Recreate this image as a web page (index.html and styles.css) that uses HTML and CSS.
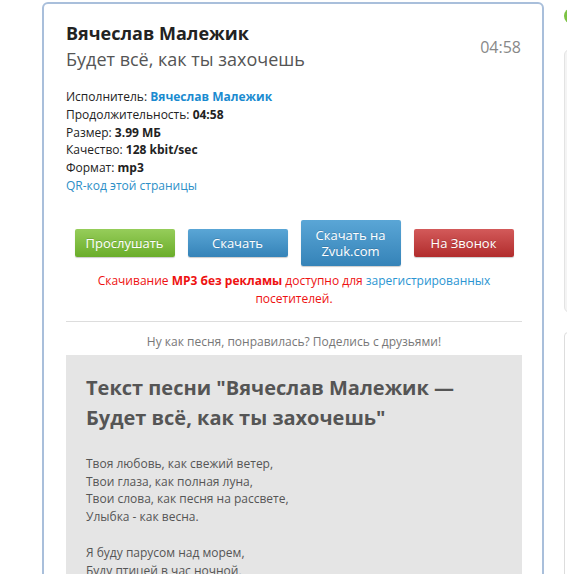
FILE: index.html
```html
<!DOCTYPE html>
<html lang="ru">
  <head>
    <meta charset="UTF-8" />
    <meta name="viewport" content="width=device-width, initial-scale=1.0" />
    <title>Вячеслав Малежик — Будет всё, как ты захочешь</title>
    <link rel="stylesheet" href="styles.css">
  </head>
  <body>
    <main class="track">
      <header class="track-head">
        <div>
          <h1>Вячеслав Малежик</h1>
          <h2>Будет всё, как ты захочешь</h2>
        </div>
        <span class="track-time">04:58</span>
      </header>

      <ul class="track-info">
        <li>Исполнитель: <a href="#" class="artist">Вячеслав Малежик</a></li>
        <li>Продолжительность: <strong>04:58</strong></li>
        <li>Размер: <strong>3.99 МБ</strong></li>
        <li>Качество: <strong>128 kbit/sec</strong></li>
        <li>Формат: <strong>mp3</strong></li>
        <li><a href="#">QR-код этой страницы</a></li>
      </ul>

      <div class="buttons">
        <a href="#" class="btn btn-green">Прослушать</a>
        <a href="#" class="btn btn-blue">Скачать</a>
        <a href="#" class="btn btn-blue btn-tall">Скачать на Zvuk.com</a>
        <a href="#" class="btn btn-red">На Звонок</a>
      </div>

      <p class="notice">
        Скачивание <strong>MP3 без рекламы</strong> доступно для
        <a href="#">зарегистрированных</a> посетителей.
      </p>

      <p class="share">Ну как песня, понравилась? Поделись с друзьями!</p>

      <section class="lyrics">
        <h3>Текст песни "Вячеслав Малежик — Будет всё, как ты захочешь"</h3>
        <p>
          Твоя любовь, как свежий ветер,<br>
          Твои глаза, как полная луна,<br>
          Твои слова, как песня на рассвете,<br>
          Улыбка - как весна.
        </p>
        <p>
          Я буду парусом над морем,<br>
          Буду птицей в час ночной,
        </p>
      </section>
    </main>

    <aside class="side">
      <div class="side-dot"></div>
      <div class="side-box"></div>
      <div class="side-panel"></div>
    </aside>
  </body>
</html>
```

FILE: styles.css
```css
body {
  font-family: "Open Sans", "DejaVu Sans", sans-serif;
  color: #333;
  background-color: #fff;
  margin: 0;
  padding: 2px 0 0 42px;
  display: flex;
  gap: 20px;
  align-items: flex-start;
}

a {
  color: #1a8bd0;
  text-decoration: none;
}

.track {
  width: 456px;
  flex-shrink: 0;
  border: 2px solid #a9bfdb;
  border-radius: 6px;
  padding: 16px 20px 0 22px;
}

.track-head {
  display: flex;
  justify-content: space-between;
  align-items: center;
}

.track-head h1 {
  font-size: 18px;
  font-weight: bold;
  color: #222;
  margin: 0;
  line-height: 26px;
}

.track-head h2 {
  font-size: 18px;
  font-weight: normal;
  color: #555;
  margin: 0;
  line-height: 26px;
}

.track-time {
  font-size: 16px;
  color: #888;
  margin: 2px 1px 0 0;
}

.track-info {
  list-style: none;
  margin: 16px 0 0;
  padding: 0;
  font-size: 12px;
  line-height: 17.8px;
  color: #222;
}

.track-info .artist {
  font-weight: bold;
  color: #1a8bd0;
}

.track-info a {
  color: #2d8fc7;
}

.buttons {
  display: flex;
  justify-content: center;
  align-items: center;
  gap: 13px;
  margin-top: 25px;
}

.btn {
  width: 100px;
  box-sizing: border-box;
  padding: 6px 8px;
  font-size: 13px;
  line-height: 16px;
  text-align: center;
  color: #fff;
  border-radius: 2px;
  text-shadow: 0 -1px 0 rgba(0, 0, 0, 0.15);
  box-shadow: 0 1px 1px rgba(0, 0, 0, 0.2);
}

.btn-tall {
  padding: 7px 8px;
}

.btn-green {
  background: linear-gradient(#96cd5a, #6aad2a);
}

.btn-blue {
  background: linear-gradient(#5aa6d6, #3583b8);
}

.btn-red {
  background: linear-gradient(#d35a5a, #b12c2c);
}

.notice {
  text-align: center;
  font-size: 12px;
  line-height: 18px;
  color: #ee1111;
  margin: 6px 0 0;
  padding: 0 20px 13px;
  border-bottom: 1px solid #ddd;
}

.notice a {
  color: #2a95d2;
}

.share {
  text-align: center;
  font-size: 12px;
  color: #777;
  margin: 0;
  padding: 11px 0 5px;
}

.lyrics {
  background-color: #e5e5e5;
  padding: 18px 20px 10px;
  color: #555;
}

.lyrics h3 {
  font-size: 20px;
  line-height: 30px;
  font-weight: bold;
  color: #555;
  margin: 0 0 22px;
}

.lyrics p {
  font-size: 12px;
  line-height: 17.8px;
  margin: 0 0 18px;
}

.side {
  display: flex;
  flex-direction: column;
  width: 60px;
  flex-shrink: 0;
}

.side-dot {
  width: 16px;
  height: 16px;
  border-radius: 50%;
  background-color: #7cc242;
  margin-top: 6px;
}

.side-box {
  height: 262px;
  margin-top: 25px;
  background-color: #f4f4f4;
  border: 1px solid #e3e3e3;
  border-radius: 6px;
}

.side-panel {
  height: 300px;
  margin-top: 19px;
  border: 1px solid #ddd;
  border-radius: 4px 0 0 0;
}
```
